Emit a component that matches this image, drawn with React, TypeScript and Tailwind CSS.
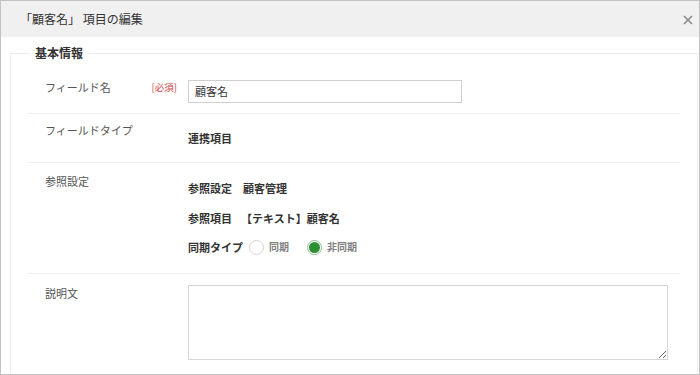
import React from "react";

function Radio({ checked, label }: { checked: boolean; label: string }) {
  return (
    <div className="flex items-center">
      {checked ? (
        <span className="w-[15px] h-[15px] rounded-full border border-[#8fbf8f] bg-white flex items-center justify-center">
          <span className="w-[11px] h-[11px] rounded-full bg-[#2f8f33]" />
        </span>
      ) : (
        <span className="w-[15px] h-[15px] rounded-full border border-[#d4d4d4] bg-white" />
      )}
      <span className="ml-[5px] text-[10px] text-[#808080]">{label}</span>
    </div>
  );
}

export default function App() {
  return (
    <div className="w-[700px] h-[375px] overflow-hidden border border-[#c3c3c3] bg-white box-border font-['Noto_Sans_CJK_JP',sans-serif] text-[#333]">
      <div className="h-[36px] bg-[#f0f0f0] flex items-center justify-between pl-[19px] pr-[6px]">
        <span className="text-[12px] text-[#333]">「顧客名」 項目の編集</span>
        <svg width="10" height="10" viewBox="0 0 10 10" className="mt-[1px]">
          <path d="M1 1 L9 9 M9 1 L1 9" stroke="#8a8a8a" strokeWidth="1.6" />
        </svg>
      </div>
      <div className="pl-[9px] pr-[1px] pt-[8px]">
        <fieldset className="border border-[#ececec] h-[400px] px-[17px]">
          <legend className="ml-[1px] px-[6px] text-[12px] leading-[16px] font-bold text-[#333]">基本情報</legend>

          <div className="flex h-[53px] border-b border-[#efefef] pt-[19px]">
            <div className="w-[160px] flex justify-between pl-[17px] pr-[11px] -mt-[1px]">
              <span className="text-[11px] leading-[16px] text-[#555]">フィールド名</span>
              <span className="text-[9.5px] leading-[16px] text-[#d2453f]">[必須]</span>
            </div>
            <div className="w-[274px] h-[23px] border border-[#cfcfcf] flex items-center pl-[6px] text-[11px] text-[#333]">顧客名</div>
          </div>

          <div className="flex h-[49px] border-b border-[#efefef]">
            <div className="w-[160px] pl-[17px] pt-[8px] text-[11px] leading-[16px] text-[#555]">フィールドタイプ</div>
            <div className="pt-[16px] text-[11px] leading-[16px] font-bold text-[#333]">連携項目</div>
          </div>

          <div className="flex h-[111px] border-b border-[#efefef]">
            <div className="w-[160px] pl-[17px] pt-[10px] text-[11px] leading-[16px] text-[#555]">参照設定</div>
            <div className="pt-[17px] flex flex-col text-[11px] leading-[16px] font-bold text-[#333]">
              <div className="flex">
                <span>参照設定</span>
                <span className="ml-[11px]">顧客管理</span>
              </div>
              <div className="flex mt-[14px]">
                <span>参照項目</span>
                <span className="ml-[9px]">【テキスト】顧客名</span>
              </div>
              <div className="flex items-center mt-[13px]">
                <span>同期タイプ</span>
                <div className="ml-[6px]">
                  <Radio checked={false} label="同期" />
                </div>
                <div className="ml-[18px]">
                  <Radio checked={true} label="非同期" />
                </div>
              </div>
            </div>
          </div>

          <div className="flex">
            <div className="w-[160px] pl-[17px] pt-[11px] text-[11px] leading-[16px] text-[#555]">説明文</div>
            <div className="pt-[11px]">
              <textarea className="block w-[480px] h-[75px] border border-[#d6d6d6] outline-none" />
            </div>
          </div>
        </fieldset>
      </div>
    </div>
  );
}
